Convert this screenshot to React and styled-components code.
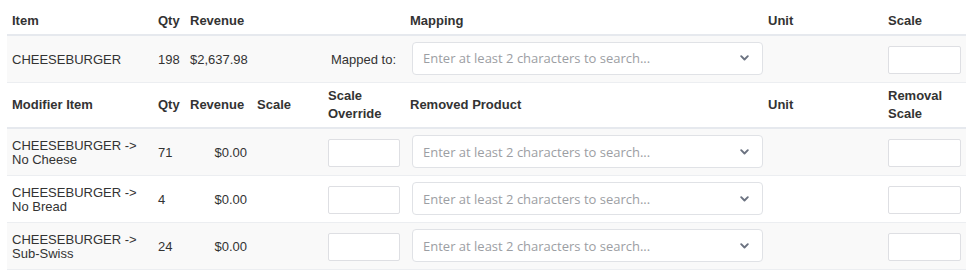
import React from "react";
import styled, { createGlobalStyle } from "styled-components";

const Global = createGlobalStyle`
  html, body { margin: 0; padding: 0; background: #ffffff; }
  body { font-family: "Liberation Sans", Arial, Helvetica, sans-serif; color: #333333; }
`;

const Page = styled.div`
  padding: 8px 8px 0 7px;
`;

const Table = styled.table`
  width: 959px;
  table-layout: fixed;
  border-collapse: collapse;
  font-size: 13px;
`;

const Row = styled.tr`
  background: ${(p) => (p.$striped ? "#f9f9f9" : "#ffffff")};
  border-bottom: ${(p) => (p.$head ? "2px solid #e6e9ee" : "1px solid #eceef1")};
  height: ${(p) => p.$h}px;
`;

const Th = styled.th`
  text-align: left;
  font-weight: bold;
  color: #333333;
  line-height: 18px;
  padding: 3px 5px;
  vertical-align: middle;
`;

const Td = styled.td`
  color: #333333;
  line-height: 14px;
  padding: ${(p) => (p.$tight ? "2px 0 0 7px" : "2px 5px 0")};
  padding-right: ${(p) => (p.$pr ? `${p.$pr}px` : undefined)};
  text-align: ${(p) => (p.$right ? "right" : "left")};
  vertical-align: middle;
`;

const Box = styled.input`
  display: block;
  box-sizing: border-box;
  width: 100%;
  height: 28px;
  border: 1px solid #dedfe3;
  border-radius: 2px;
  background: #ffffff;
  margin: 0;
  padding: 0 6px;
  font: inherit;
  outline: none;
`;

const Select = styled.div`
  box-sizing: border-box;
  width: 351px;
  height: 33px;
  border: 1px solid #e0e2e6;
  border-radius: 4px;
  background: #ffffff;
  display: flex;
  align-items: center;
  justify-content: space-between;
  padding: 0 13px 0 10px;
  margin-top: ${(p) => (p.$up ? "-3px" : "-2px")};
`;

const Placeholder = styled.span`
  font-family: "Open Sans", "Noto Sans", sans-serif;
  font-size: 13px;
  color: #9c9ea3;
  white-space: nowrap;
`;

const Chevron = () => (
  <svg width="9" height="6" viewBox="0 0 9 6" aria-hidden="true">
    <polyline points="1.2,1.2 4.5,4.5 7.8,1.2" fill="none" stroke="#6b7280" strokeWidth="1.9" strokeLinecap="round" strokeLinejoin="round" />
  </svg>
);

const Search = ({ up }) => (
  <Select $up={up}>
    <Placeholder>Enter at least 2 characters to search...</Placeholder>
    <Chevron />
  </Select>
);

const modifiers = [
  { name: "No Cheese", qty: 71, rev: "$0.00", striped: true },
  { name: "No Bread", qty: 4, rev: "$0.00", striped: false },
  { name: "Sub-Swiss", qty: 24, rev: "$0.00", striped: true },
];

export default function App() {
  return (
    <Page>
      <Global />
      <Table>
        <colgroup>
          <col style={{ width: 146 }} />
          <col style={{ width: 32 }} />
          <col style={{ width: 67 }} />
          <col style={{ width: 71 }} />
          <col style={{ width: 82 }} />
          <col style={{ width: 358 }} />
          <col style={{ width: 120 }} />
          <col style={{ width: 83 }} />
        </colgroup>
        <tbody>
          <Row $head $h={27}>
            <Th>Item</Th>
            <Th>Qty</Th>
            <Th>Revenue</Th>
            <Th />
            <Th />
            <Th>Mapping</Th>
            <Th>Unit</Th>
            <Th>Scale</Th>
          </Row>
          <Row $striped $h={47}>
            <Td>CHEESEBURGER</Td>
            <Td>198</Td>
            <Td $right>$2,637.98</Td>
            <Td />
            <Td $right $pr={9}>Mapped to:</Td>
            <Td $tight><Search up /></Td>
            <Td />
            <Td><Box aria-label="Scale" /></Td>
          </Row>
          <Row $head $h={46}>
            <Th>Modifier Item</Th>
            <Th>Qty</Th>
            <Th>Revenue</Th>
            <Th>Scale</Th>
            <Th>Scale<br />Override</Th>
            <Th>Removed Product</Th>
            <Th>Unit</Th>
            <Th>Removal<br />Scale</Th>
          </Row>
          {modifiers.map((m) => (
            <Row key={m.name} $striped={m.striped} $h={47}>
              <Td>CHEESEBURGER -&gt;<br />{m.name}</Td>
              <Td>{m.qty}</Td>
              <Td $right>{m.rev}</Td>
              <Td />
              <Td><Box aria-label="Scale override" /></Td>
              <Td $tight><Search /></Td>
              <Td />
              <Td><Box aria-label="Removal scale" /></Td>
            </Row>
          ))}
        </tbody>
      </Table>
    </Page>
  );
}
